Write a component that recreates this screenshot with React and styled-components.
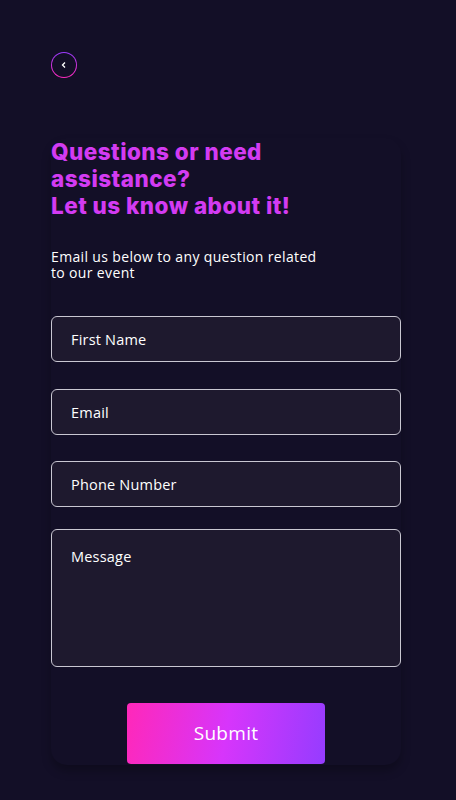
import React from 'react';
import styled, { createGlobalStyle } from 'styled-components';

const GlobalStyle = createGlobalStyle`
  body {
    margin: 0;
    background: #130f27;
    font-family: "Open Sans", "Liberation Sans", sans-serif;
  }
`;

const Page = styled.div`
  min-height: 800px;
  box-sizing: border-box;
  padding: 52px 55px 0 51px;
`;

const BackButton = styled.button`
  width: 26px;
  height: 26px;
  padding: 0;
  border: none;
  border-radius: 50%;
  background: linear-gradient(180deg, #9a3bff, #ff2abd);
  display: flex;
  align-items: center;
  justify-content: center;
  cursor: pointer;

  span {
    width: 24px;
    height: 24px;
    border-radius: 50%;
    background: #130f27;
    display: flex;
    align-items: center;
    justify-content: center;
  }
`;

const Card = styled.div`
  margin-top: 60px;
  border-radius: 16px;
  box-shadow: 0 6px 10px rgba(0, 0, 0, 0.25);
  display: flex;
  flex-direction: column;
`;

const Title = styled.h1`
  margin: 0;
  font-family: Inter, "Liberation Sans", sans-serif;
  font-weight: 800;
  font-size: 22.5px;
  line-height: 27px;
  color: #d33bf2;
  letter-spacing: 0.45px;
`;

const Lead = styled.p`
  margin: 30px 0 0;
  max-width: 272px;
  font-size: 14px;
  line-height: 16px;
  letter-spacing: 0.35px;
  color: #ffffff;
`;

const Form = styled.form`
  margin-top: 35px;
  display: flex;
  flex-direction: column;
`;

const Field = styled.div`
  box-sizing: border-box;
  margin-top: ${p => p.$gap || 0}px;
  height: ${p => (p.$tall ? '138px' : '46px')};
  border: 1px solid #c9c7d2;
  border-radius: 6px;
  background: #1e192e;
  padding: ${p => (p.$tall ? '17px' : '0')} 19px;
  display: flex;
  align-items: ${p => (p.$tall ? 'flex-start' : 'center')};
  font-size: 14.5px;
  letter-spacing: 0.2px;
  color: #ffffff;
`;

const Submit = styled.button`
  align-self: center;
  margin: 36px 0 1px;
  width: 198px;
  height: 61px;
  border: none;
  border-radius: 4px;
  background: linear-gradient(100deg, #ff28b9 0%, #d735fb 50%, #953cff 100%);
  color: #ffffff;
  font-family: "Open Sans", "Liberation Sans", sans-serif;
  font-size: 19px;
  letter-spacing: 0.3px;
  padding-bottom: 3px;
  cursor: pointer;
`;

export default function App() {
  return (
    <>
      <GlobalStyle />
      <Page>
        <BackButton aria-label="Back">
          <span>
            <svg width="8" height="8" viewBox="0 0 8 8">
              <path d="M5 1.5 L2.5 4 L5 6.5" fill="none" stroke="#fff" strokeWidth="1.3" />
            </svg>
          </span>
        </BackButton>
        <Card>
          <Title>
            Questions or need<br />assistance?<br />Let us know about it!
          </Title>
          <Lead>Email us below to any question related to our event</Lead>
          <Form>
            <Field>First Name</Field>
            <Field $gap={27}>Email</Field>
            <Field $gap={26}>Phone Number</Field>
            <Field $gap={22} $tall>Message</Field>
            <Submit type="button">Submit</Submit>
          </Form>
        </Card>
      </Page>
    </>
  );
}
